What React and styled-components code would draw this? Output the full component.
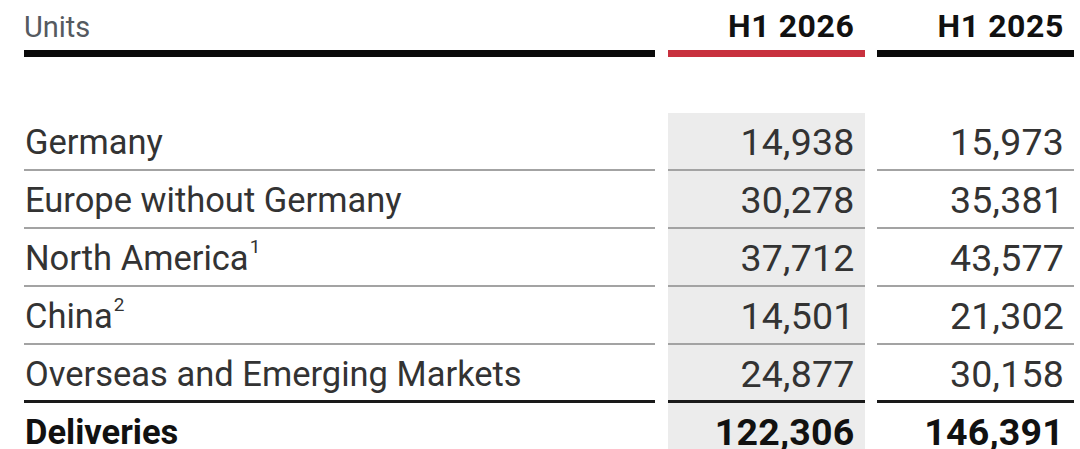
import React from "react";
import styled, { createGlobalStyle } from "styled-components";

const Global = createGlobalStyle`
  html, body { margin: 0; padding: 0; background: #fff; }
  body { font-family: Roboto, "Liberation Sans", sans-serif; }
`;

const Page = styled.div`
  padding: 0 6px 0 24px;
  width: 1050px;
  height: 449px;
  overflow: hidden;
`;

const Table = styled.div`
  display: grid;
  grid-template-columns: 631px 197px 197px;
  column-gap: 12.5px;
`;

const HeadCell = styled.div`
  height: 57px;
  box-sizing: border-box;
  border-bottom: 7px solid ${(p) => (p.$accent ? "#c8313e" : "#0a0a0a")};
  display: flex;
  align-items: flex-end;
  justify-content: ${(p) => (p.$num ? "flex-end" : "flex-start")};
  padding-bottom: 8px;
  padding-right: ${(p) => (p.$num ? "10px" : "0")};
  font-size: ${(p) => (p.$num ? "32px" : "29px")};
  line-height: 1;
  font-weight: ${(p) => (p.$num ? 700 : 400)};
  color: ${(p) => (p.$num ? "#111" : "#555a60")};
  letter-spacing: ${(p) => (p.$num ? "0.6px" : "0")};
`;

const Spacer = styled.div`
  height: 56px;
`;

const Cell = styled.div`
  height: 58px;
  box-sizing: border-box;
  border-bottom: ${(p) => (p.$strong ? "3px solid #1a1a1a" : "2px solid #a3a3a3")};
  background: ${(p) => (p.$shade ? "#ececec" : "transparent")};
  display: flex;
  align-items: center;
  justify-content: ${(p) => (p.$num ? "flex-end" : "flex-start")};
  padding: 2px ${(p) => (p.$num ? "10px" : "0")} 0 ${(p) => (p.$num ? "0" : "1px")};
  font-size: ${(p) => (p.$num ? "37.5px" : "34.5px")};
  letter-spacing: ${(p) => (p.$num ? "0.2px" : "0")};
  font-weight: ${(p) => (p.$bold ? 700 : 400)};
  color: ${(p) => (p.$bold ? "#111" : "#333")};
  white-space: nowrap;
`;

const Sup = styled.span`
  font-size: 0.55em;
  position: relative;
  top: -0.6em;
  margin-left: 1px;
`;

const rows = [
  { label: "Germany", a: "14,938", b: "15,973" },
  { label: "Europe without Germany", a: "30,278", b: "35,381" },
  { label: "North America", sup: "1", a: "37,712", b: "43,577" },
  { label: "China", sup: "2", a: "14,501", b: "21,302" },
  { label: "Overseas and Emerging Markets", a: "24,877", b: "30,158", strong: true },
  { label: "Deliveries", a: "122,306", b: "146,391", bold: true },
];

export default function App() {
  return (
    <Page>
      <Global />
      <Table>
        <HeadCell>Units</HeadCell>
        <HeadCell $num $accent>H1 2026</HeadCell>
        <HeadCell $num>H1 2025</HeadCell>
        <Spacer />
        <Spacer />
        <Spacer />
        {rows.map((r) => (
          <React.Fragment key={r.label}>
            <Cell $strong={r.strong} $bold={r.bold}>
              {r.label}
              {r.sup && <Sup>{r.sup}</Sup>}
            </Cell>
            <Cell $num $shade $strong={r.strong} $bold={r.bold}>{r.a}</Cell>
            <Cell $num $strong={r.strong} $bold={r.bold}>{r.b}</Cell>
          </React.Fragment>
        ))}
      </Table>
    </Page>
  );
}
